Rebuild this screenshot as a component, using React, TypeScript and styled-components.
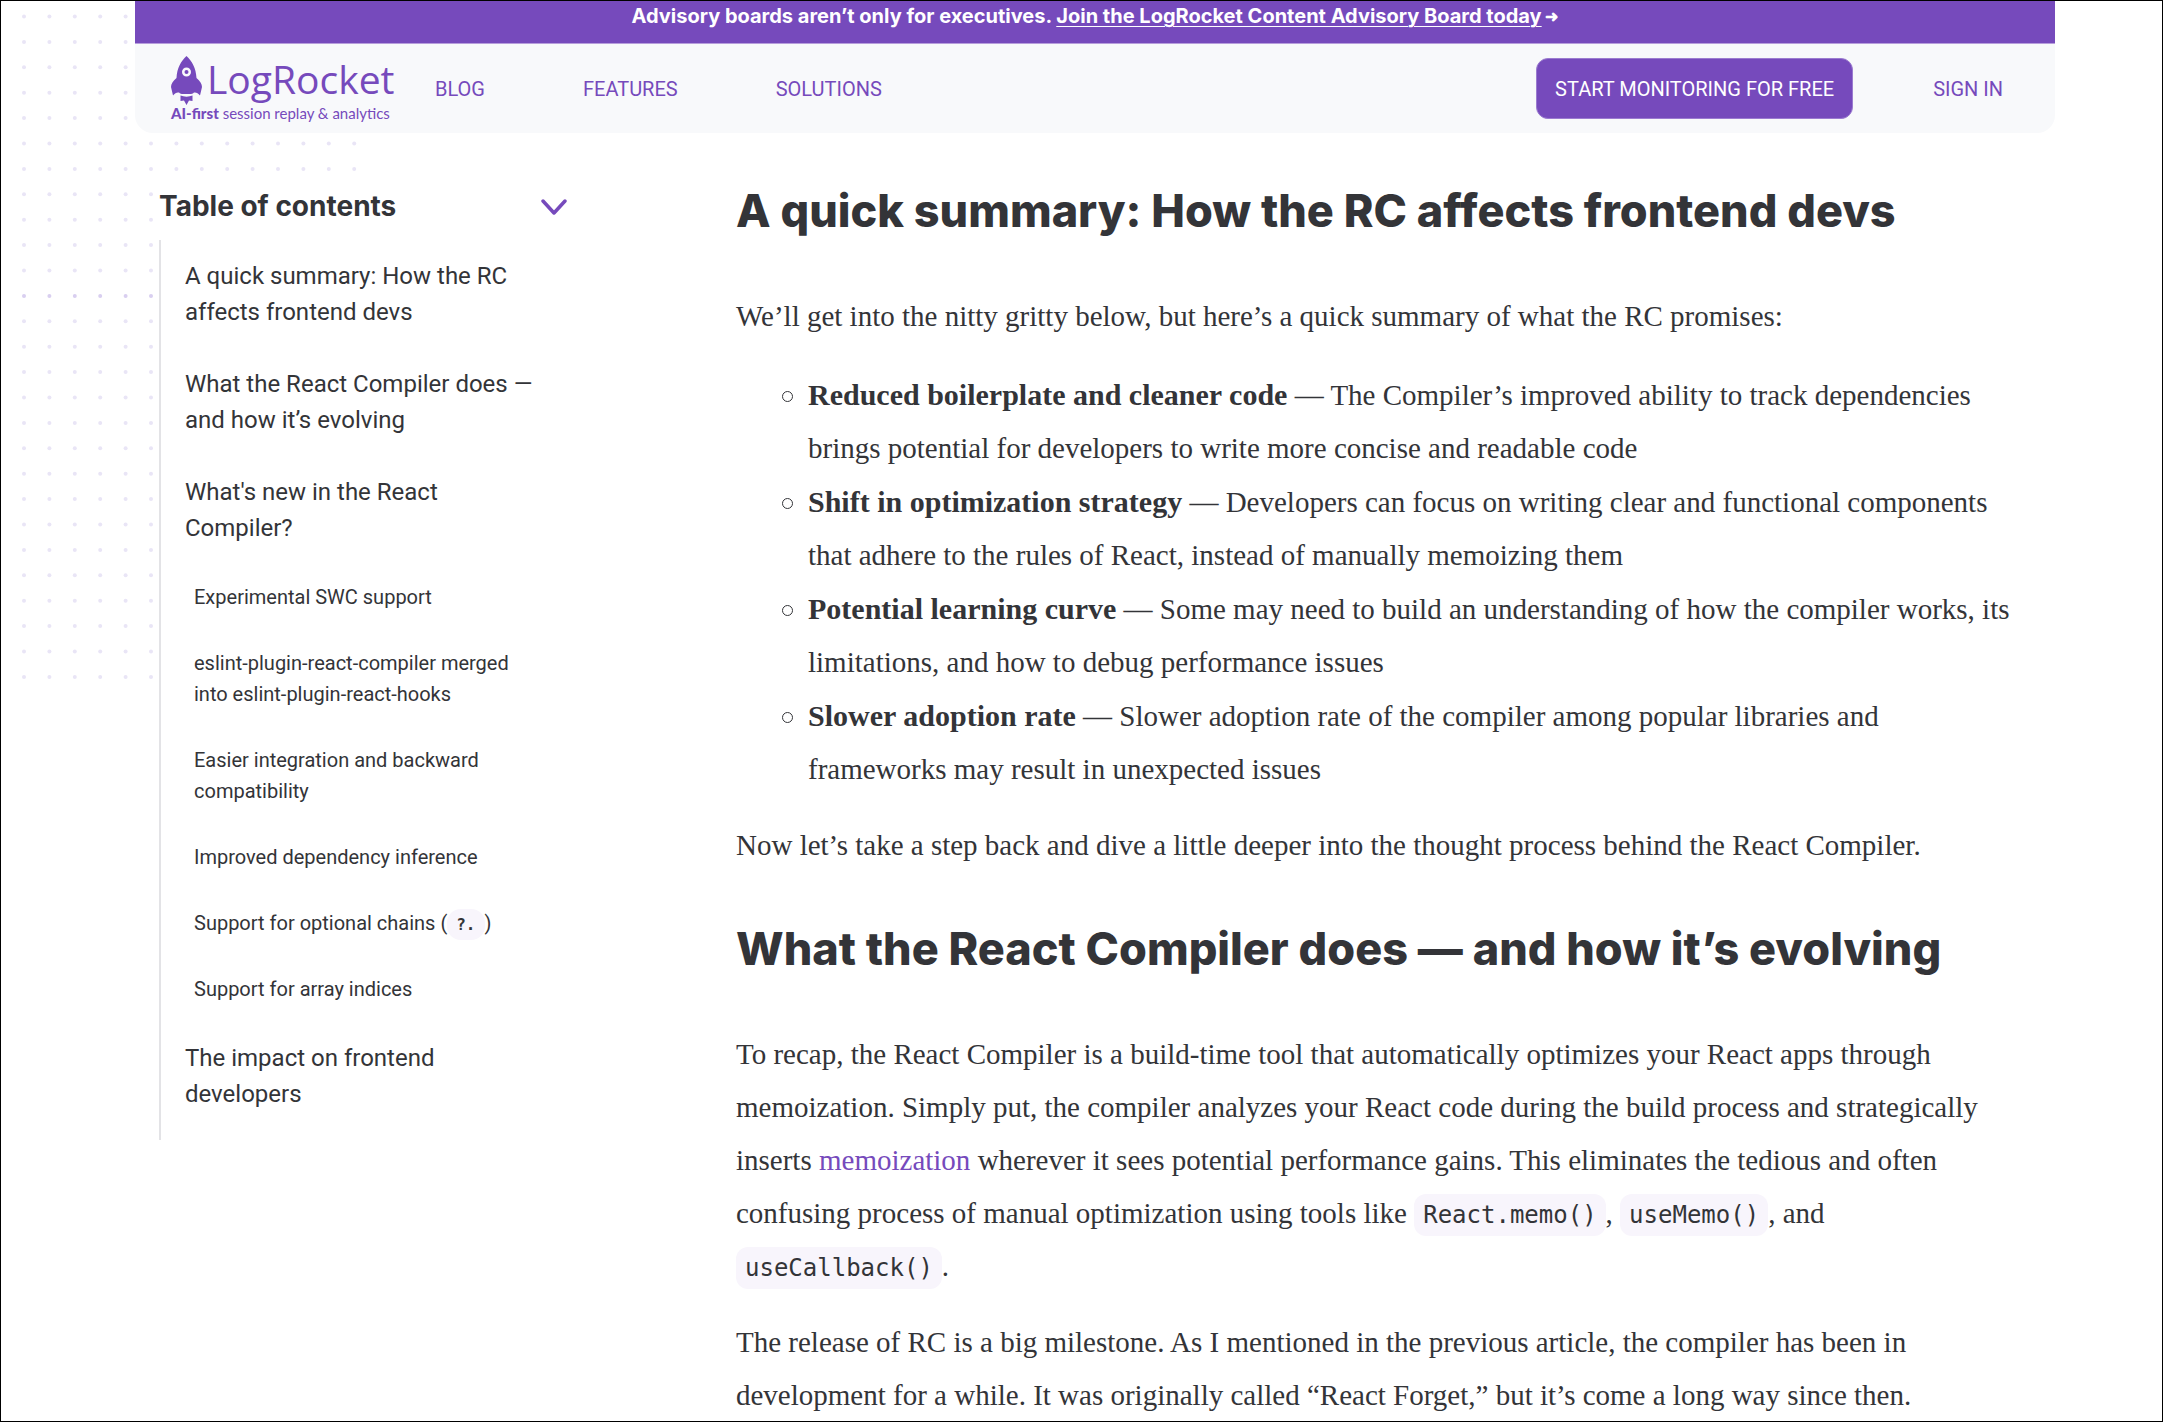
import React from "react";
import styled, { createGlobalStyle } from "styled-components";

const purple = "#764abc";
const ink = "#333438";
const sans = `Roboto, "Liberation Sans", sans-serif`;
const display = `Inter, "Liberation Sans", sans-serif`;
const serif = `"Liberation Serif", serif`;
const mono = `"DejaVu Sans Mono", monospace`;

const GlobalStyle = createGlobalStyle`
  *, *::before, *::after { box-sizing: border-box; }
  body { margin: 0; background: #fff; color: ${ink}; font-family: ${sans}; }
`;

const Page = styled.div`
  position: relative;
  height: 100vh;
  overflow: hidden;
  border: 1px solid #000;
`;

const DotField = styled.svg`
  position: absolute;
  top: 0;
  left: 0;
  z-index: -1;
`;

const Shell = styled.div`
  margin: 0 107px 0 134px;
`;

const Banner = styled.aside`
  display: flex;
  justify-content: center;
  height: 43px;
  padding-top: 2px;
  border-bottom: 1px solid #b79edc;
  background: ${purple};
  color: #fff;
  font-family: ${display};
  font-size: 20px;
  font-weight: 700;
  line-height: 26px;
  white-space: pre;

  a {
    color: inherit;
    text-decoration-thickness: 1px;
    text-underline-offset: 3px;
  }
`;

const Arrow = styled.span`
  font-size: 16px;
`;

const Nav = styled.nav`
  display: flex;
  align-items: center;
  height: 89px;
  padding: 0 52px 0 36px;
  border-radius: 0 0 18px 18px;
  background: #f8f9fb;
`;

const Logo = styled.a`
  display: grid;
  grid-template-columns: 31px auto;
  column-gap: 5px;
  width: 264px;
  color: ${purple};
  text-decoration: none;
`;

const LogoName = styled.span`
  font-family: "Open Sans", sans-serif;
  font-size: 39px;
  line-height: 46px;
`;

const Tagline = styled.span`
  grid-column: 1 / -1;
  font-family: Lato, sans-serif;
  font-size: 15px;
  line-height: 16px;
  white-space: nowrap;

  b { font-weight: 900; }
`;

const NavLinks = styled.div`
  display: flex;
  gap: 98px;
  margin-right: auto;
`;

const NavLink = styled.a`
  color: ${purple};
  font-size: 20px;
  line-height: 24px;
  text-decoration: none;
`;

const TrialButton = styled.button`
  height: 61px;
  margin-right: 80px;
  padding: 0 18px;
  border: 1px solid #9b7bd0;
  border-radius: 12px;
  background: ${purple};
  color: #fff;
  font: 400 20px/24px ${sans};
`;

const Columns = styled.div`
  display: grid;
  grid-template-columns: 408px minmax(0, 1fr);
  column-gap: 169px;
  padding: 48px 24px 0;
`;

const Toc = styled.aside`
  align-self: start;
  background: #fff;
`;

const TocHeader = styled.div`
  display: flex;
  align-items: center;
  justify-content: space-between;
  height: 59px;
  padding-bottom: 10px;
`;

const TocTitle = styled.h2`
  margin: 0;
  font-family: ${display};
  font-size: 28px;
  line-height: 34px;
  font-weight: 700;
`;

const ToggleButton = styled.button`
  display: flex;
  padding: 2px 0 0;
  border: 0;
  background: none;
  color: ${purple};
`;

const TocList = styled.ul`
  margin: 0;
  padding: 0 0 10px 24px;
  border-left: 2px solid #e3e3e6;
  list-style: none;
`;

const TocItem = styled.li<{ $sub?: boolean }>`
  padding: ${(p) => (p.$sub ? "18px 0 17px 9px" : "18px 0")};
  font-size: ${(p) => (p.$sub ? "20px" : "24px")};
  line-height: ${(p) => (p.$sub ? "31px" : "36px")};
  white-space: nowrap;

  a { color: inherit; text-decoration: none; }
`;

const TocCode = styled.code`
  padding: 6px 9px;
  border-radius: 14px;
  background: #f8f5fc;
  font: 700 16px/20px ${mono};
`;

const Article = styled.main`
  color: ${ink};
  font-family: ${serif};
  font-size: 29px;
  line-height: 53px;
  white-space: nowrap;
`;

const Heading = styled.h2`
  margin: 0 0 49px;
  font-family: ${display};
  font-size: 45px;
  line-height: 60px;
  font-weight: 800;

  p + & { margin-top: 47px; }
`;

const Paragraph = styled.p`
  margin: 0 0 23px;
`;

const BulletList = styled.ul`
  margin: 26px 0 23px;
  padding: 0 0 0 46px;
  list-style: none;

  b { font-size: 30px; line-height: 50px; }
`;

const Bullet = styled.li`
  display: grid;
  grid-template-columns: 11px auto;
  column-gap: 15px;
  margin-bottom: 1px;

  &::before {
    content: "";
    width: 11px;
    height: 11px;
    margin-top: 22px;
    border: 1px solid ${ink};
    border-radius: 50%;
  }
`;

const TextLink = styled.a`
  color: ${purple};
  text-decoration: none;
`;

const Code = styled.code`
  padding: 7px 9px;
  border-radius: 12px;
  background: #f8f5fc;
  font: 400 24px/28px ${mono};
`;

const Lines = ({ of }: { of: string[] }) => (
  <>
    {of.map((line, i) => (
      <React.Fragment key={line}>
        {i > 0 && <br />}
        {line}
      </React.Fragment>
    ))}
  </>
);

const Dots = () => {
  const step = 25.4;
  const dots = [];
  for (let row = 0; row < 27; row++) {
    for (let col = 0; col < 14; col++) {
      dots.push(
        <circle
          key={`${row}-${col}`}
          cx={23 + col * step}
          cy={15.5 + row * step}
          r={2}
          fill={row === 11 ? "#d9cff0" : "#e9e5f6"}
        />
      );
    }
  }
  return (
    <DotField width="380" height="700" aria-hidden="true">
      {dots}
    </DotField>
  );
};

const Rocket = () => (
  <svg width="31" height="49" viewBox="0 0 31 49" fill="currentColor" aria-hidden="true">
    <path
      fillRule="evenodd"
      d="M15.5 0C10 5 6 12 5.500 22C2 25 0 28 0 31L2 39.500C4 37 6 36 8 36.500C9.500 38.500 12 38 15.500 38C19 38 21.500 38.500 23 36.500C25 36 27 37 29 39.500L31 31C31 28 29 25 25.500 22C25 12 21 5 15.500 0ZM15.500 11.500A4.500 4.500 0 1 1 15.500 20.500A4.500 4.500 0 1 1 15.500 11.500Z"
    />
    <circle cx="15.500" cy="16" r="2" />
    <path d="M9.500 39.500C13 41 18 41 21.500 39.500L21.500 45L18 44.500L15.500 49L13 44.500L9.500 45Z" />
  </svg>
);

const tocTop = [
  ["A quick summary: How the RC", "affects frontend devs"],
  ["What the React Compiler does —", "and how it’s evolving"],
  ["What's new in the React", "Compiler?"],
];

const tocSub = [
  ["Experimental SWC support"],
  ["eslint-plugin-react-compiler merged", "into eslint-plugin-react-hooks"],
  ["Easier integration and backward", "compatibility"],
  ["Improved dependency inference"],
];

const bullets = [
  {
    lead: "Reduced boilerplate and cleaner code",
    text: [" — The Compiler’s improved ability to track dependencies", "brings potential for developers to write more concise and readable code"],
  },
  {
    lead: "Shift in optimization strategy",
    text: [" — Developers can focus on writing clear and functional components", "that adhere to the rules of React, instead of manually memoizing them"],
  },
  {
    lead: "Potential learning curve",
    text: [" — Some may need to build an understanding of how the compiler works, its", "limitations, and how to debug performance issues"],
  },
  {
    lead: "Slower adoption rate",
    text: [" — Slower adoption rate of the compiler among popular libraries and", "frameworks may result in unexpected issues"],
  },
];

export default function App() {
  return (
    <Page>
      <GlobalStyle />
      <Dots />
      <Shell>
        <Banner>
          <span>Advisory boards aren’t only for executives. </span>
          <a href="#board">Join the LogRocket Content Advisory Board today</a>
          <Arrow> ➜</Arrow>
        </Banner>
        <Nav>
          <Logo href="#home">
            <Rocket />
            <LogoName>LogRocket</LogoName>
            <Tagline>
              <b>AI-first</b> session replay &amp; analytics
            </Tagline>
          </Logo>
          <NavLinks>
            <NavLink href="#blog">BLOG</NavLink>
            <NavLink href="#features">FEATURES</NavLink>
            <NavLink href="#solutions">SOLUTIONS</NavLink>
          </NavLinks>
          <TrialButton>START MONITORING FOR FREE</TrialButton>
          <NavLink href="#signin">SIGN IN</NavLink>
        </Nav>
        <Columns>
          <Toc>
            <TocHeader>
              <TocTitle>Table of contents</TocTitle>
              <ToggleButton aria-label="Toggle table of contents">
                <svg width="26" height="16" viewBox="0 0 26 16" fill="none" stroke="currentColor" strokeWidth="3.500" strokeLinecap="round" strokeLinejoin="round">
                  <path d="M2 2L13 14L24 2" />
                </svg>
              </ToggleButton>
            </TocHeader>
            <TocList>
              {tocTop.map((item) => (
                <TocItem key={item[0]}>
                  <a href="#section"><Lines of={item} /></a>
                </TocItem>
              ))}
              {tocSub.map((item) => (
                <TocItem key={item[0]} $sub>
                  <a href="#section"><Lines of={item} /></a>
                </TocItem>
              ))}
              <TocItem $sub>
                <a href="#section">Support for optional chains (<TocCode>?.</TocCode>)</a>
              </TocItem>
              <TocItem $sub>
                <a href="#section">Support for array indices</a>
              </TocItem>
              <TocItem>
                <a href="#section"><Lines of={["The impact on frontend", "developers"]} /></a>
              </TocItem>
            </TocList>
          </Toc>
          <Article>
            <Heading>A quick summary: How the RC affects frontend devs</Heading>
            <Paragraph>We’ll get into the nitty gritty below, but here’s a quick summary of what the RC promises:</Paragraph>
            <BulletList>
              {bullets.map((b) => (
                <Bullet key={b.lead}>
                  <div>
                    <b>{b.lead}</b>
                    <Lines of={b.text} />
                  </div>
                </Bullet>
              ))}
            </BulletList>
            <Paragraph>Now let’s take a step back and dive a little deeper into the thought process behind the React Compiler.</Paragraph>
            <Heading>What the React Compiler does — and how it’s evolving</Heading>
            <Paragraph>
              <Lines
                of={[
                  "To recap, the React Compiler is a build-time tool that automatically optimizes your React apps through",
                  "memoization. Simply put, the compiler analyzes your React code during the build process and strategically",
                ]}
              />
              <br />
              inserts <TextLink href="#memoization">memoization</TextLink> wherever it sees potential performance gains. This eliminates the tedious and often
              <br />
              confusing process of manual optimization using tools like <Code>React.memo()</Code>, <Code>useMemo()</Code>, and
              <br />
              <Code>useCallback()</Code>.
            </Paragraph>
            <Paragraph>
              <Lines
                of={[
                  "The release of RC is a big milestone. As I mentioned in the previous article, the compiler has been in",
                  "development for a while. It was originally called “React Forget,” but it’s come a long way since then.",
                ]}
              />
            </Paragraph>
          </Article>
        </Columns>
      </Shell>
    </Page>
  );
}
